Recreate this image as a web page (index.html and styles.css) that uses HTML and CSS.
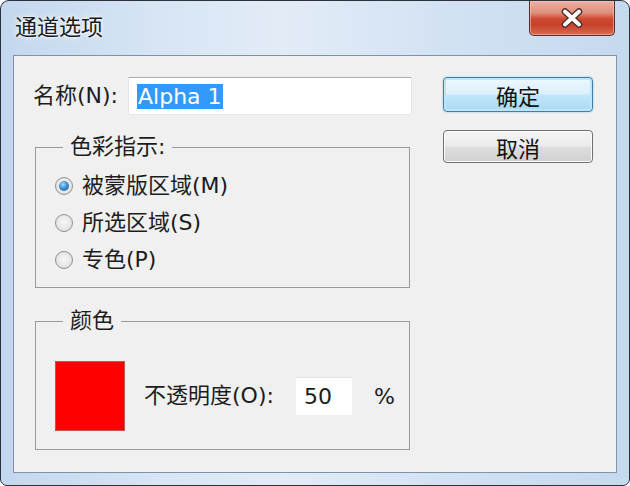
FILE: index.html
```html
<!DOCTYPE html>
<html lang="zh-CN">
<head>
<meta charset="utf-8">
<title>通道选项</title>
<link rel="stylesheet" href="styles.css">
</head>
<body>
<div class="window">
  <div class="titlebar">
    <span class="title">通道选项</span>
    <button class="close" aria-label="关闭">
      <svg width="24" height="20" viewBox="0 0 24 20">
        <path d="M5 3.5 L19 16.5 M19 3.5 L5 16.5" stroke="#4b2a24" stroke-width="6.5" stroke-linecap="round" fill="none"/>
        <path d="M5 3.5 L19 16.5 M19 3.5 L5 16.5" stroke="#ffffff" stroke-width="4" stroke-linecap="round" fill="none"/>
      </svg>
    </button>
  </div>
  <div class="client">
    <div class="main">
      <div class="name-row">
        <label class="field-label">名称(N):</label>
        <div class="text-input name-input"><span class="sel">Alpha 1</span></div>
      </div>
      <fieldset class="group indicator">
        <legend>色彩指示:</legend>
        <label class="radio checked"><span class="dot"></span>被蒙版区域(M)</label>
        <label class="radio"><span class="dot"></span>所选区域(S)</label>
        <label class="radio"><span class="dot"></span>专色(P)</label>
      </fieldset>
      <fieldset class="group color">
        <legend>颜色</legend>
        <div class="color-row">
          <div class="swatch"></div>
          <span class="op-label">不透明度(O):</span>
          <div class="text-input op-input">50</div>
          <span class="pct">%</span>
        </div>
      </fieldset>
    </div>
    <div class="actions">
      <button class="btn default">确定</button>
      <button class="btn cancel">取消</button>
    </div>
  </div>
</div>
</body>
</html>
```
FILE: styles.css
```css
* { box-sizing: border-box; }
html, body { margin: 0; padding: 0; background: #ffffff; }
body {
  font-family: "DejaVu Sans", "Noto Sans CJK SC", sans-serif;
  font-size: 22px;
  color: #1c1c1c;
}
.window {
  width: 630px;
  height: 486px;
  border: 1px solid #2a323c;
  border-radius: 9px 9px 7px 7px;
  padding: 0 12px 12px;
  background: linear-gradient(to right, #c3d7ee 0%, #d7e5f4 25%, #e2ecf7 45%, #d3e2f3 70%, #c5d9ef 100%);
  display: flex;
  flex-direction: column;
}
.titlebar {
  height: 54px;
  display: flex;
  align-items: flex-start;
  margin: 0 -12px;
  padding-left: 14px;
  padding-right: 14px;
}
.title {
  line-height: 26px;
  margin-top: 14px;
  font-size: 22px;
  color: #1a1a1a;
  text-shadow: 0 0 6px #ffffff, 0 0 3px #ffffff;
}
.close {
  margin-left: auto;
  width: 86px;
  height: 35px;
  padding: 0;
  border: 1px solid #5a2c24;
  border-top: none;
  border-radius: 0 0 5px 5px;
  background: linear-gradient(#eab0a2 0%, #e08f7c 35%, #cd4a33 52%, #c8412b 70%, #d96a52 100%);
  box-shadow: inset 0 0 0 1px rgba(255, 200, 185, 0.55);
  display: flex;
  align-items: center;
  justify-content: center;
}
.client {
  flex: 1;
  border: 1px solid #7e92a9;
  background: #f0f0f0;
  display: flex;
}
.main {
  width: 398px;
  padding: 21px 0 0 19px;
}
.name-row {
  display: flex;
  align-items: center;
  height: 38px;
}
.field-label { line-height: 26px; }
.text-input {
  background: #ffffff;
  border: 1px solid #e3e9ef;
  border-top-color: #abadb3;
  display: flex;
  align-items: center;
}
.name-input {
  margin-left: auto;
  width: 284px;
  height: 38px;
  padding-left: 8px;
}
.sel {
  background: #3399ff;
  color: #ffffff;
  line-height: 25px;
  padding: 0 1px;
}
.group {
  margin: 0;
  border: 1px solid #9a9a9a;
  min-width: 0;
  width: 375px;
  margin-left: 2px;
}
.group legend {
  line-height: 26px;
  padding: 0 7px;
  margin-left: 8px;
}
.indicator {
  margin-top: 19px;
  padding: 7px 0 9px 19px;
}
.radio {
  display: flex;
  align-items: center;
  height: 37px;
  line-height: 26px;
}
.dot {
  width: 18px;
  height: 18px;
  border-radius: 50%;
  border: 1px solid #8f9090;
  background: radial-gradient(circle at 50% 45%, #f7f7f7 0%, #e6e6e6 60%, #d2d2d2 100%);
  margin-right: 9px;
  display: flex;
  align-items: center;
  justify-content: center;
}
.checked .dot::after {
  content: "";
  width: 10px;
  height: 10px;
  border-radius: 50%;
  background: radial-gradient(circle at 40% 35%, #a9dcfa 0%, #3b8fd0 45%, #165592 100%);
}
.color {
  margin-top: 20px;
  padding: 27px 0 18px 19px;
}
.color-row {
  display: flex;
  align-items: center;
  height: 70px;
}
.swatch {
  width: 70px;
  height: 70px;
  background: #ff0000;
  border: 1px solid #b35656;
  margin-right: 19px;
}
.op-label { line-height: 26px; }
.op-input {
  margin-left: 21px;
  width: 58px;
  height: 39px;
  padding-left: 8px;
  border-color: #f2f2f2;
  border-top-color: #e4e4e4;
}
.pct { margin-left: 21px; }
.actions {
  margin-left: auto;
  width: 173px;
  padding: 21px 23px 0 0;
  display: flex;
  flex-direction: column;
}
.btn {
  font-family: inherit;
  font-size: 22px;
  color: #111111;
  border-radius: 4px;
  padding: 0;
  width: 150px;
}
.btn.default {
  height: 35px;
  border: 1px solid #3c7fb1;
  background: linear-gradient(#ecf7fd 0%, #dcf1fc 48%, #c1e6fb 52%, #a9d9f3 100%);
  box-shadow: inset 0 0 0 2px #bfe6f8, 0 0 2px #7fc4ea;
}
.btn.cancel {
  margin-top: 18px;
  height: 33px;
  border: 1px solid #707070;
  background: linear-gradient(#f4f4f4 0%, #ececec 48%, #dedede 52%, #d0d0d0 100%);
  box-shadow: inset 0 0 0 1px #fbfbfb;
}
```
